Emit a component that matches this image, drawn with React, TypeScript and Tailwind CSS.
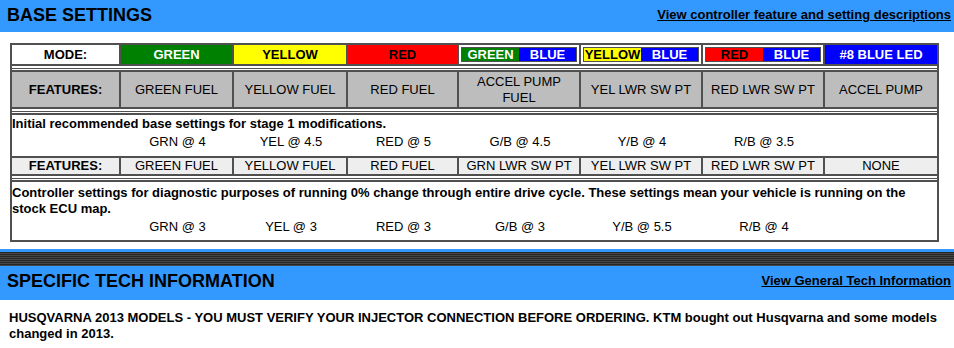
import React from 'react';

const COLS = 'grid grid-cols-[109px_113px_114px_111px_122px_122px_122px_112px]';
const LINE = 'border-[#505050]';

type Half = { label: string; bg: string; fg: string };

const modeCells: Array<Half | [Half, Half]> = [
  { label: 'GREEN', bg: 'bg-[#008000]', fg: 'text-white' },
  { label: 'YELLOW', bg: 'bg-[#ffff00]', fg: 'text-black' },
  { label: 'RED', bg: 'bg-[#ff0000]', fg: 'text-black' },
  [
    { label: 'GREEN', bg: 'bg-[#008000]', fg: 'text-white' },
    { label: 'BLUE', bg: 'bg-[#0000ff]', fg: 'text-white' },
  ],
  [
    { label: 'YELLOW', bg: 'bg-[#ffff00]', fg: 'text-black' },
    { label: 'BLUE', bg: 'bg-[#0000ff]', fg: 'text-white' },
  ],
  [
    { label: 'RED', bg: 'bg-[#ff0000]', fg: 'text-black' },
    { label: 'BLUE', bg: 'bg-[#0000ff]', fg: 'text-white' },
  ],
  { label: '#8 BLUE LED', bg: 'bg-[#0000ff]', fg: 'text-white' },
];

const features1 = ['GREEN FUEL', 'YELLOW FUEL', 'RED FUEL', 'ACCEL PUMP FUEL', 'YEL LWR SW PT', 'RED LWR SW PT', 'ACCEL PUMP'];
const features2 = ['GREEN FUEL', 'YELLOW FUEL', 'RED FUEL', 'GRN LWR SW PT', 'YEL LWR SW PT', 'RED LWR SW PT', 'NONE'];
const stage1 = ['GRN @ 4', 'YEL @ 4.5', 'RED @ 5', 'G/B @ 4.5', 'Y/B @ 4', 'R/B @ 3.5'];
const stock = ['GRN @ 3', 'YEL @ 3', 'RED @ 3', 'G/B @ 3', 'Y/B @ 5.5', 'R/B @ 4'];

// thin white / dark / white strip between table rows
const Divider = () => (
  <div>
    <div className="h-[2px] bg-white" />
    <div className="h-[1px] bg-[#505050]" />
    <div className="h-[1px] bg-white" />
  </div>
);

const Values = ({ items }: { items: string[] }) => (
  <div className={`${COLS} text-[13px] leading-4`}>
    <div />
    {items.map((v, i) => (
      <div key={i} className="text-center">
        {v}
      </div>
    ))}
    <div />
  </div>
);

const SectionBar = ({ title, link }: { title: string; link: string }) => (
  <div className="flex items-start justify-between bg-[#3399ff] pl-[7px] pr-[3px]">
    <h2 className="mt-[6px] text-[18px] font-bold leading-[18px]">{title}</h2>
    <a href="#" className="mt-[7px] text-[13px] font-bold leading-4 underline">
      {link}
    </a>
  </div>
);

export default function App() {
  return (
    <div className="h-[348px] w-[954px] overflow-hidden bg-white font-['Liberation_Sans',Arial,sans-serif] text-black">
      <div className="h-[32px] bg-[#3399ff]">
        <SectionBar title="BASE SETTINGS" link="View controller feature and setting descriptions" />
      </div>

      <div className={`ml-[10px] mt-[11px] w-[929px] border-2 ${LINE}`}>
        {/* mode row */}
        <div className={`${COLS} border-b-2 ${LINE} text-[13px] font-bold leading-[19px]`}>
          <div className={`h-[19px] border-r-2 ${LINE} bg-white text-center`}>MODE:</div>
          {modeCells.map((c, i) => {
            const last = i === modeCells.length - 1;
            const edge = last ? '' : `border-r-2 ${LINE}`;
            if (Array.isArray(c)) {
              return (
                <div key={i} className={`h-[19px] ${edge} bg-white p-[2px]`}>
                  <div className={`flex h-[15px] border ${LINE} leading-[13px]`}>
                    {c.map((h, j) => (
                      <div key={j} className={`flex-1 text-center ${h.bg} ${h.fg}`}>
                        {h.label}
                      </div>
                    ))}
                  </div>
                </div>
              );
            }
            return (
              <div key={i} className={`h-[19px] ${edge} text-center ${c.bg} ${c.fg}`}>
                {c.label}
              </div>
            );
          })}
        </div>

        <Divider />

        {/* features row */}
        <div className={`${COLS} border-y-2 ${LINE} bg-[#bdbdbd] text-[13px] leading-4`}>
          <div className={`flex h-[35px] items-center justify-center border-r-2 ${LINE} font-bold`}>FEATURES:</div>
          {features1.map((f, i) => (
            <div
              key={i}
              className={`flex h-[35px] items-center justify-center px-1 text-center ${i === features1.length - 1 ? '' : `border-r-2 ${LINE}`}`}
            >
              {f === 'ACCEL PUMP FUEL' ? (
                <span>
                  ACCEL PUMP
                  <br />
                  FUEL
                </span>
              ) : (
                f
              )}
            </div>
          ))}
        </div>

        <Divider />

        {/* stage 1 */}
        <div className={`border-t-2 ${LINE} pb-[6px] pt-[1px]`}>
          <p className="text-[13px] font-bold leading-4">Initial recommended base settings for stage 1 modifications.</p>
          <div className="mt-[2px]">
            <Values items={stage1} />
          </div>
        </div>

        <div className={`${COLS} border-y-2 ${LINE} bg-[#eeeeee] text-[13px] leading-4`}>
          <div className={`border-r-2 ${LINE} text-center font-bold`}>FEATURES:</div>
          {features2.map((f, i) => (
            <div key={i} className={`text-center ${i === features2.length - 1 ? '' : `border-r-2 ${LINE}`}`}>
              {f}
            </div>
          ))}
        </div>

        <Divider />

        {/* stock map */}
        <div className={`border-t-2 ${LINE} pb-[5px] pt-[3px]`}>
          <p className="text-[13px] font-bold leading-4">
            Controller settings for diagnostic purposes of running 0% change through entire drive cycle. These settings mean your vehicle is running on the stock ECU map.
          </p>
          <div className="mt-[2px]">
            <Values items={stock} />
          </div>
        </div>
      </div>

      <div className="mt-[7px] h-[3px] bg-[#3399ff]" />
      <div className="h-[14px] bg-[repeating-linear-gradient(to_bottom,#262626_0px,#262626_1px,#474747_1px,#474747_2px)]" />
      <div className="h-[34px] bg-[#3399ff]">
        <SectionBar title="SPECIFIC TECH INFORMATION" link="View General Tech Information" />
      </div>

      <p className="mt-[10px] pl-[9px] pr-[10px] text-[13px] font-bold leading-4">
        HUSQVARNA 2013 MODELS - YOU MUST VERIFY YOUR INJECTOR CONNECTION BEFORE ORDERING. KTM bought out Husqvarna and some models changed in 2013.
      </p>
    </div>
  );
}
